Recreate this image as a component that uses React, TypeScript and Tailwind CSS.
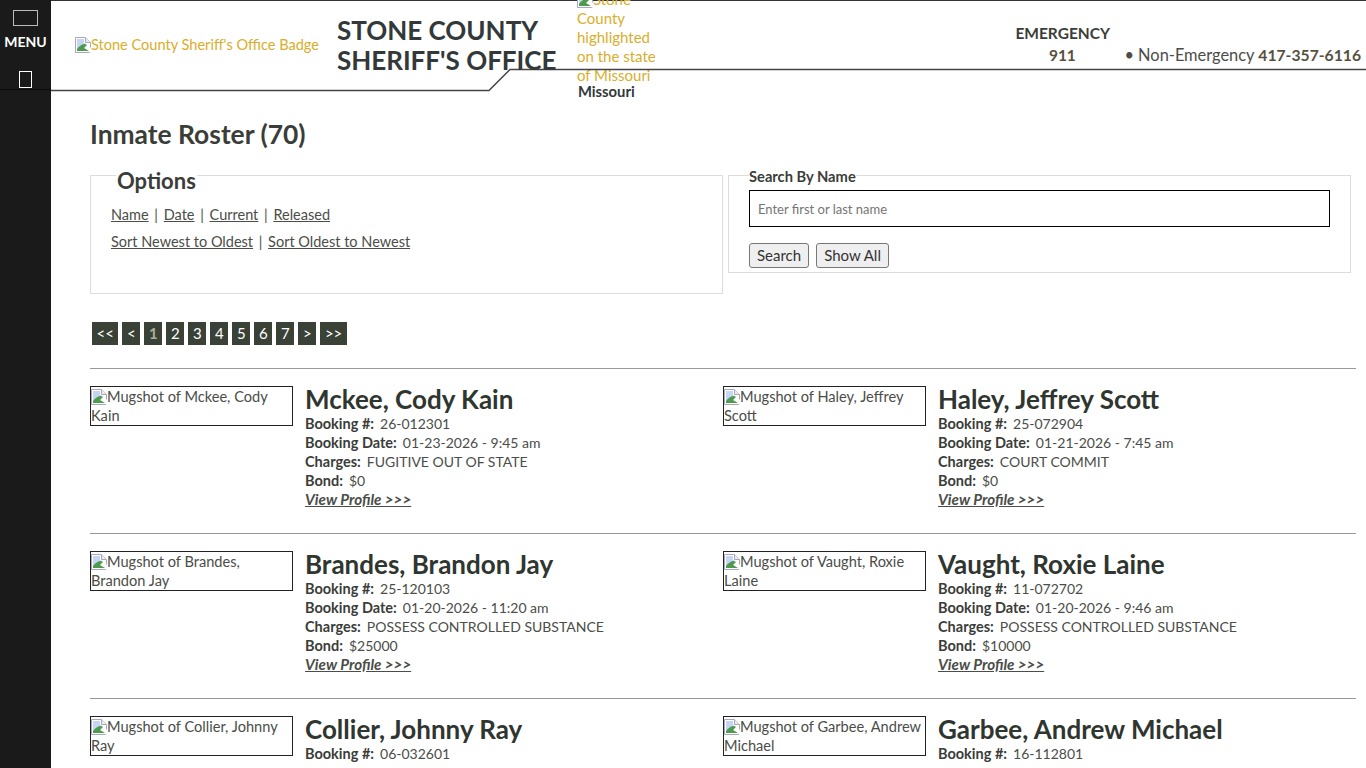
const inmates = [
  { name: "Mckee, Cody Kain", alt: "Mugshot of Mckee, Cody Kain", booking: "26-012301", date: "01-23-2026 - 9:45 am", charges: "FUGITIVE OUT OF STATE", bond: "$0" },
  { name: "Haley, Jeffrey Scott", alt: "Mugshot of Haley, Jeffrey Scott", booking: "25-072904", date: "01-21-2026 - 7:45 am", charges: "COURT COMMIT", bond: "$0" },
  { name: "Brandes, Brandon Jay", alt: "Mugshot of Brandes, Brandon Jay", booking: "25-120103", date: "01-20-2026 - 11:20 am", charges: "POSSESS CONTROLLED SUBSTANCE", bond: "$25000" },
  { name: "Vaught, Roxie Laine", alt: "Mugshot of Vaught, Roxie Laine", booking: "11-072702", date: "01-20-2026 - 9:46 am", charges: "POSSESS CONTROLLED SUBSTANCE", bond: "$10000" },
  { name: "Collier, Johnny Ray", alt: "Mugshot of Collier, Johnny Ray", booking: "06-032601", date: "", charges: "", bond: "" },
  { name: "Garbee, Andrew Michael", alt: "Mugshot of Garbee, Andrew Michael", booking: "16-112801", date: "", charges: "", bond: "" },
];

const pages = ["<<", "<", "1", "2", "3", "4", "5", "6", "7", ">", ">>"];

const BrokenImage = () => (
  <svg width="16" height="16" viewBox="0 0 16 16" className="inline-block align-[-3px]">
    <path d="M.5.5h10l5 5v10H.5z" fill="#fff" stroke="#a8a8bc" />
    <path d="M10.5.5v5h5" fill="#ececf4" stroke="#a8a8bc" />
    <path d="M2 2h7v4l3 1-2 1-8 4z" fill="#c6d6f2" />
    <path d="M2 14v-2c2-3 5-5 8-5l2 1-3 3 5 3z" fill="#4f9a4f" />
    <path d="M14 15l1-5 1 1v5z" fill="#fff" />
  </svg>
);

const Sep = () => <span className="mx-[2px]"> | </span>;

const Row = ({ label, value }: { label: string; value: string }) => (
  <div className="h-[19px] leading-[19px]">
    <b className="text-[14.5px] font-bold text-[#3a3d38]">{label}:</b>
    <span className="ml-[6px]">{value}</span>
  </div>
);

const InmateCard = ({ inmate }: { inmate: (typeof inmates)[number] }) => (
  <div className="flex items-start">
    <div className="mt-[17px] h-[40px] w-[203px] shrink-0 overflow-hidden border border-[#222] text-[14.6px] leading-[19px]">
      <BrokenImage />
      {inmate.alt}
    </div>
    <div className="ml-[12px] mt-[16px]">
      <h2 className="text-[26px] font-bold leading-[29px] text-[#2f352f]">{inmate.name}</h2>
      <Row label="Booking #" value={inmate.booking} />
      {inmate.date && <Row label="Booking Date" value={inmate.date} />}
      {inmate.charges && <Row label="Charges" value={inmate.charges} />}
      {inmate.bond && <Row label="Bond" value={inmate.bond} />}
      {inmate.date && (
        <a className="block h-[19px] text-[15.2px] font-bold italic leading-[19px] underline">View Profile &gt;&gt;&gt;</a>
      )}
    </div>
  </div>
);

export default function App() {
  return (
    <div className="h-[768px] overflow-hidden bg-white font-['Lato',sans-serif] text-[14px] text-[#4a4d48]">
      <div className="fixed bottom-0 left-0 top-0 z-20 w-[51px] bg-[#1a1a1a]">
        <div className="flex h-[90px] flex-col items-center border-b border-[#0a0a0a] pt-[10px]">
          <div className="h-[16px] w-[25px] border border-[#bbb]" />
          <div className="mt-[7px] text-[14px] font-bold leading-[18px] text-white">MENU</div>
          <div className="mt-[20px] h-[17px] w-[13px] border border-white" />
        </div>
      </div>

      <header className="relative h-[100px] border-t border-[#333] pl-[51px]">
        <svg className="absolute left-[51px] top-[67px] h-[24px] w-[1315px]" viewBox="0 0 1315 24" fill="none">
          <path d="M0 22.5H438L459 1.5H1315" stroke="#444" strokeWidth="1.5" />
        </svg>
        <div className="flex">
          <div className="ml-[24px] mt-[35px] h-[20px] whitespace-nowrap text-[14.55px] leading-[18px] text-[#d9ae2c]">
            <BrokenImage />
            Stone County Sheriff's Office Badge
          </div>
          <h1 className="relative ml-[18px] mt-[14px] w-[240px] text-[26px] font-bold leading-[30px] text-[#33383a]">
            STONE COUNTY SHERIFF'S OFFICE
          </h1>
          <div className="w-[80px]">
            <div className="-mt-[11px] text-[15px] leading-[19px] text-[#d9ae2c]">
              <BrokenImage />
              Stone County highlighted on the state of Missouri
            </div>
            <div className="ml-[1px] text-[14.8px] font-bold leading-[12px] text-[#33383a]">Missouri</div>
          </div>
          <div className="ml-auto mt-[21px] flex leading-[22px]">
            <div className="w-[94px] text-center text-[15.5px] font-bold text-[#3a3d38]">
              EMERGENCY
              <div className="text-[#57503f]">911</div>
            </div>
            <div className="ml-[15px] mr-[5px] mt-[22px] whitespace-nowrap text-[16.4px]">
              • Non-Emergency <b className="text-[15.7px] text-[#57503f]">417-357-6116</b>
            </div>
          </div>
        </div>
      </header>

      <main className="pl-[90px] pr-[10px]">
        <h1 className="mt-[17px] text-[26.4px] font-bold leading-[34px] text-[#3a3d38]">Inmate Roster (70)</h1>

        <div className="mt-[6px] flex items-start gap-[5px]">
          <fieldset className="h-[137px] w-[633px] border border-[#ddd] px-[20px]">
            <legend className="ml-[5px] px-[1px] pt-[12px] text-[22px] font-bold leading-[24px] text-[#3a3d38]">Options</legend>
            <div className="mt-[8px] text-[14.5px] leading-[27px]">
              <div>
                <a className="underline">Name</a>
                <Sep />
                <a className="underline">Date</a>
                <Sep />
                <a className="underline">Current</a>
                <Sep />
                <a className="underline">Released</a>
              </div>
              <div>
                <a className="underline">Sort Newest to Oldest</a>
                <Sep />
                <a className="underline">Sort Oldest to Newest</a>
              </div>
            </div>
          </fieldset>
          <fieldset className="mt-[8px] h-[108px] w-[623px] border border-[#ddd] px-[20px]">
            <legend className="pt-[2px] text-[14.7px] font-bold leading-[18px] text-[#3a3d38]">Search By Name</legend>
            <input
              placeholder="Enter first or last name"
              className="mt-[5px] block h-[37px] w-[581px] border border-black px-[8px] text-[13px] placeholder:text-[#757575]"
            />
            <div className="mt-[16px] flex gap-[7px]">
              <button className="h-[25px] rounded-[3px] border border-[#777] bg-[#efefef] px-[7px] text-[15px] text-[#333]">Search</button>
              <button className="h-[25px] rounded-[3px] border border-[#777] bg-[#efefef] px-[7px] text-[15px] text-[#333]">Show All</button>
            </div>
          </fieldset>
        </div>

        <div className="mt-[28px] flex gap-[4px] pl-[2px]">
          {pages.map((p) => (
            <span
              key={p}
              className={`flex h-[23px] min-w-[18px] items-center justify-center bg-[#3a4137] px-[4.5px] text-[15px] ${p === "1" ? "font-bold text-[#a9ad9f]" : "text-white"}`}
            >
              {p}
            </span>
          ))}
        </div>

        <div className="mt-[23px] grid grid-cols-[633px_633px]">
          {inmates.map((inmate) => (
            <div key={inmate.name} className="h-[165px] border-t border-[#999]">
              <InmateCard inmate={inmate} />
            </div>
          ))}
        </div>
      </main>
    </div>
  );
}
